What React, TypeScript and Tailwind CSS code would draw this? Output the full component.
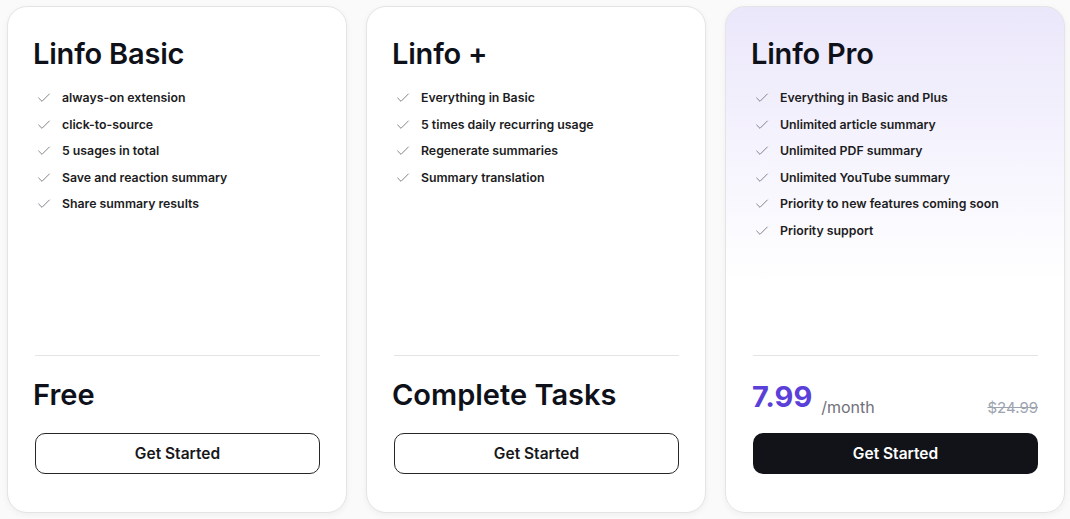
import { Check } from 'lucide-react';

interface Plan {
  name: string;
  features: string[];
  highlight?: boolean;
}

const plans: Plan[] = [
  {
    name: 'Linfo Basic',
    features: [
      'always-on extension',
      'click-to-source',
      '5 usages in total',
      'Save and reaction summary',
      'Share summary results',
    ],
  },
  {
    name: 'Linfo +',
    features: [
      'Everything in Basic',
      '5 times daily recurring usage',
      'Regenerate summaries',
      'Summary translation',
    ],
  },
  {
    name: 'Linfo Pro',
    highlight: true,
    features: [
      'Everything in Basic and Plus',
      'Unlimited article summary',
      'Unlimited PDF summary',
      'Unlimited YouTube summary',
      'Priority to new features coming soon',
      'Priority support',
    ],
  },
];

function PlanCard({ plan, price }: { plan: Plan; price: React.ReactNode }) {
  return (
    <div
      className={`flex h-[507px] w-[340px] shrink-0 flex-col rounded-[20px] border border-[#e4e4e7] pl-[25px] pr-[26px] pt-[29px] pb-[38px] shadow-[0_2px_6px_rgba(0,0,0,0.05)] ${
        plan.highlight ? 'bg-gradient-to-b from-[#ebe7fb] to-white to-55%' : 'bg-white'
      }`}
    >
      <h2 className="text-[29px] font-semibold leading-[36px] tracking-[-0.2px] text-[#0f111a]">{plan.name}</h2>
      <ul className="mt-[13px] flex flex-col">
        {plan.features.map((f) => (
          <li key={f} className="flex h-[26.5px] items-center gap-[10px]">
            <Check className="ml-[3px] h-[16px] w-[16px] text-[#7a7a82]" strokeWidth={1.4} />
            <span className="text-[12.3px] font-semibold text-[#1c1c22]">{f}</span>
          </li>
        ))}
      </ul>
      <div className="flex-1" />
      <div className="ml-[2px] border-t border-[#e4e4e7]" />
      <div className="mt-[21px] h-[36px]">{price}</div>
      <button
        type="button"
        className={`ml-[2px] mt-[20px] h-[41px] w-[calc(100%-2px)] rounded-[10px] text-[15.5px] font-semibold ${
          plan.highlight
            ? 'bg-[#111318] text-white'
            : 'border border-[#27272a] bg-white text-[#18181b]'
        }`}
      >
        Get Started
      </button>
    </div>
  );
}

export default function App() {
  return (
    <div className="h-[519px] w-[1070px] bg-[#fafafa] pl-[7px] pt-[6px]" style={{ fontFamily: 'Inter, "Noto Sans", sans-serif' }}>
      <div className="flex gap-[19px]">
        <PlanCard
          plan={plans[0]}
          price={<div className="text-[29px] font-semibold leading-[36px] text-[#0f111a]">Free</div>}
        />
        <PlanCard
          plan={plans[1]}
          price={<div className="text-[29px] font-semibold leading-[36px] text-[#0f111a]">Complete Tasks</div>}
        />
        <PlanCard
          plan={plans[2]}
          price={
            <div className="flex h-full items-end">
              <span className="mb-[-2px] ml-[1px] text-[29px] font-bold leading-[36px] text-[#5b3fd9]">7.99</span>
              <span className="mb-[-4px] ml-[9px] text-[16px] leading-[20px] text-[#71717a]">/month</span>
              <span className="mb-[-5px] ml-auto text-[15px] leading-[20px] text-[#9ca3af] line-through">$24.99</span>
            </div>
          }
        />
      </div>
    </div>
  );
}
